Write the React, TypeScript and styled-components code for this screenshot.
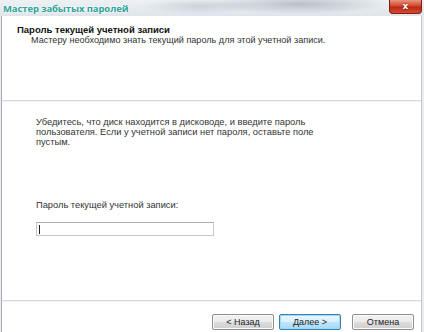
import styled, { createGlobalStyle } from "styled-components"

const GlobalStyle = createGlobalStyle`
    html, body {
        margin: 0;
        padding: 0;
        background: #ffffff;
    }
    body {
        font-family: "Liberation Sans", Arial, sans-serif;
        color: #222;
    }
`

const Window = styled.div`
    width: 424px;
    height: 332px;
    display: flex;
    flex-direction: column;
    overflow: hidden;
    background: #e9edf2;
`

const TitleBar = styled.div`
    height: 16px;
    flex: none;
    display: flex;
    align-items: center;
    justify-content: space-between;
    padding-left: 3px;
    background:
        radial-gradient(ellipse 90px 10px at 300px 4px, rgba(120,135,150,0.45), transparent),
        radial-gradient(ellipse 60px 8px at 200px 6px, rgba(140,150,165,0.3), transparent),
        linear-gradient(#eef1f4, #dfe5eb);
`

const Title = styled.span`
    font-family: "Open Sans", "Noto Sans", sans-serif;
    font-size: 9.5px;
    font-weight: 700;
    color: #2fa596;
    text-shadow: 0 0 3px #ffffff, 0 0 2px #ffffff;
    letter-spacing: -0.1px;
`

const CloseButton = styled.div`
    width: 33px;
    height: 14px;
    margin-right: 2px;
    align-self: flex-start;
    border-radius: 0 0 4px 4px;
    border: 1px solid #7d1d14;
    border-top: none;
    box-sizing: border-box;
    background: linear-gradient(#e79682, #d4462e 45%, #bb2a14 55%, #d24a30);
    display: flex;
    align-items: center;
    justify-content: center;
    color: #fff;
    font-family: "DejaVu Sans", sans-serif;
    font-size: 9px;
    font-weight: bold;
    line-height: 1;
    text-shadow: 0 0 2px #6a140a;
`

const Frame = styled.div`
    flex: 1;
    display: flex;
    flex-direction: column;
    margin: 0 2px 0 1px;
    border-left: 1px solid #a9adb3;
    border-right: 1px solid #c4c8cd;
    background: #ffffff;
`

const Header = styled.div`
    height: 84px;
    flex: none;
    padding: 8px 0 0 15px;
    box-sizing: border-box;
`

const HeaderTitle = styled.div`
    font-size: 9.5px;
    font-weight: bold;
    color: #111;
    line-height: 11px;
`

const HeaderSubtitle = styled.div`
    font-size: 9.1px;
    line-height: 11px;
    padding-left: 14px;
    color: #333;
`

const Separator = styled.div`
    height: 1px;
    flex: none;
    background: #d6d8da;
    border-bottom: 1px solid #f4f4f4;
`

const Body = styled.div`
    flex: 1;
    padding: 15px 20px 0 34px;
    font-size: 9.3px;
    line-height: 10px;
    color: #333;
`

const Paragraph = styled.p`
    margin: 0;
    width: 290px;
`

const FieldLabel = styled.div`
    margin-top: 53px;
`

const PasswordInput = styled.div`
    margin-top: 12px;
    width: 178px;
    height: 14px;
    box-sizing: border-box;
    border: 1px solid #c5c9ce;
    border-top-color: #abb0b6;
    display: flex;
    align-items: center;
    padding-left: 2px;
    &::before {
        content: "";
        width: 1px;
        height: 9px;
        background: #222;
    }
`

const Footer = styled.div`
    height: 30px;
    flex: none;
    display: flex;
    justify-content: flex-end;
    align-items: flex-start;
    padding: 12px 7px 0 0;
    box-sizing: border-box;
    gap: 5px;
`

type ButtonProps = {
    $focused?: boolean
    $spaced?: boolean
}

const Button = styled.div<ButtonProps>`
    width: 62px;
    height: 16px;
    box-sizing: border-box;
    border-radius: 2px;
    border: 1px solid ${({ $focused }) => ($focused ? "#3c7fb1" : "#8e8f8f")};
    background: ${({ $focused }) =>
        $focused
            ? "linear-gradient(#eaf6fd, #d9f0fc 50%, #bee6fd 51%, #a7d9f5)"
            : "linear-gradient(#f2f2f2, #ebebeb 50%, #dddddd 51%, #cfcfcf)"};
    box-shadow: inset 0 0 0 1px ${({ $focused }) => ($focused ? "#9ddaf9" : "#fbfbfb")};
    margin-left: ${({ $spaced }) => ($spaced ? "6px" : "0")};
    display: flex;
    align-items: center;
    justify-content: center;
    font-size: 9px;
    color: #222;
`

export default function App() {
    return (
        <>
            <GlobalStyle />
            <Window>
                <TitleBar>
                    <Title>Мастер забытых паролей</Title>
                    <CloseButton>x</CloseButton>
                </TitleBar>
                <Frame>
                    <Header>
                        <HeaderTitle>Пароль текущей учетной записи</HeaderTitle>
                        <HeaderSubtitle>
                            Мастеру необходимо знать текущий пароль для этой учетной записи.
                        </HeaderSubtitle>
                    </Header>
                    <Separator />
                    <Body>
                        <Paragraph>
                            Убедитесь, что диск находится в дисководе, и введите пароль
                            пользователя. Если у учетной записи нет пароля, оставьте поле
                            пустым.
                        </Paragraph>
                        <FieldLabel>Пароль текущей учетной записи:</FieldLabel>
                        <PasswordInput />
                    </Body>
                    <Separator />
                    <Footer>
                        <Button>&lt; Назад</Button>
                        <Button $focused>Далее &gt;</Button>
                        <Button $spaced>Отмена</Button>
                    </Footer>
                </Frame>
            </Window>
        </>
    )
}
